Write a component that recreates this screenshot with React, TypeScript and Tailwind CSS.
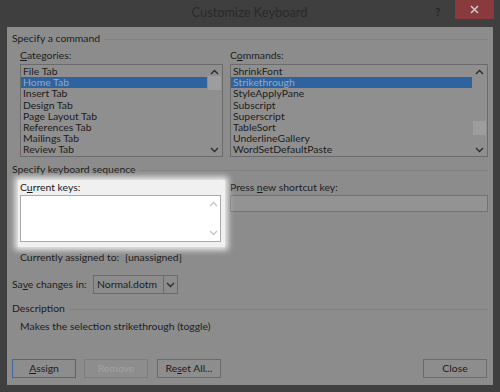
import React from "react";

const U = ({ children }: { children: React.ReactNode }) => (
  <span className="underline underline-offset-[1px]">{children}</span>
);

function Chevron({ dir, color = "#2a2a2a" }: { dir: "up" | "down"; color?: string }) {
  return (
    <svg width="9" height="6" viewBox="0 0 9 6">
      <path
        d={dir === "up" ? "M1 5 L4.5 1.5 L8 5" : "M1 1 L4.5 4.5 L8 1"}
        fill="none"
        stroke={color}
        strokeWidth="1.3"
      />
    </svg>
  );
}

function ListBox({
  items,
  selected,
  width,
  thumbTop,
}: {
  items: string[];
  selected: number;
  width: string;
  thumbTop: number;
}) {
  return (
    <div className={`${width} h-[93px] border border-[#6b6b6b] bg-[#8f8f8f] flex`}>
      <div className="flex-1 flex flex-col pt-[1px]">
        {items.map((it, i) => (
          <div
            key={it}
            className={`h-[11.2px] leading-[11.2px] pl-[2px] whitespace-nowrap text-[10.4px] ${
              i === selected ? "bg-[#2f63a0] text-[#93a9c4]" : ""
            }`}
          >
            {it}
          </div>
        ))}
      </div>
      <div className="w-[15px] flex flex-col items-center pt-[4px] pb-[3px]">
        <Chevron dir="up" />
        <div className="flex-1 w-full relative">
          <div
            className="absolute left-[1px] right-[1px] h-[14px] bg-[#9d9d9d]"
            style={{ top: thumbTop }}
          />
        </div>
        <Chevron dir="down" />
      </div>
    </div>
  );
}

function GroupHeader({ title }: { title: string }) {
  return (
    <div className="h-[14px] flex items-center gap-[4px]">
      <span className="whitespace-nowrap">{title}</span>
      <div className="flex-1 h-px bg-[#818181]" />
    </div>
  );
}

function Btn({
  children,
  className = "",
}: {
  children: React.ReactNode;
  className?: string;
}) {
  return (
    <div
      className={`w-[64px] h-[19px] flex items-center justify-center border bg-[#8d8d8d] ${className}`}
    >
      {children}
    </div>
  );
}

export default function App() {
  return (
    <div
      className="w-[500px] h-[392px] bg-[#3f3f3f] flex flex-col overflow-hidden text-[#1c1c1c]"
      style={{ fontFamily: 'Lato, "Noto Sans", sans-serif' }}
    >
      {/* title bar */}
      <div className="h-[27px] flex items-start">
        <div className="flex-1 h-full flex items-center justify-center pl-[64px] text-[12.8px] text-[#2a2a2a] pb-[1px]">
          Customize Keyboard
        </div>
        <div className="w-[20px] pt-[3px] text-[12px] font-bold text-[#262626]">?</div>
        <div className="w-[39px] h-[19px] bg-[#8a3a3c] flex items-center justify-center mr-[6px]">
          <svg width="9" height="9" viewBox="0 0 9 9">
            <path d="M1 1 L8 8 M8 1 L1 8" stroke="#c9c9c9" strokeWidth="1.6" />
          </svg>
        </div>
      </div>

      {/* client */}
      <div className="mx-[7px] h-[358px] bg-[#8c8c8c] pl-[5px] pr-[5px] pt-[5px] flex flex-col text-[10.4px]">
        <GroupHeader title="Specify a command" />

        <div className="flex mt-[3px] pl-[8px]">
          <div className="w-[211px] flex flex-col">
            <div className="h-[15px] leading-[13px]">
              <U>C</U>ategories:
            </div>
            <ListBox
              width="w-[203px]"
              selected={1}
              thumbTop={1}
              items={[
                "File Tab",
                "Home Tab",
                "Insert Tab",
                "Design Tab",
                "Page Layout Tab",
                "References Tab",
                "Mailings Tab",
                "Review Tab",
              ]}
            />
          </div>
          <div className="flex flex-col">
            <div className="h-[15px] leading-[13px]">
              C<U>o</U>mmands:
            </div>
            <ListBox
              width="w-[258px]"
              selected={1}
              thumbTop={46}
              items={[
                "ShrinkFont",
                "Strikethrough",
                "StyleApplyPane",
                "Subscript",
                "Superscript",
                "TableSort",
                "UnderlineGallery",
                "WordSetDefaultPaste",
              ]}
            />
          </div>
        </div>

        <div className="mt-[6px]">
          <GroupHeader title="Specify keyboard sequence" />
        </div>

        <div className="flex mt-[3px] pl-[6px]">
          <div className="w-[209px] bg-[#f0f0f0] text-[#1a1a1a] pl-[2px] pr-[4px] pb-[5px] shadow-[0_0_6px_3px_rgba(255,255,255,0.85)] relative z-10">
            <div className="h-[14px] leading-[14px]">
              C<U>u</U>rrent keys:
            </div>
            <div className="mt-[1px] h-[47px] bg-white border border-[#a9a9a9] flex justify-end">
              <div className="w-[14px] flex flex-col items-center justify-between py-[5px]">
                <Chevron dir="up" color="#c4c4c4" />
                <Chevron dir="down" color="#c4c4c4" />
              </div>
            </div>
          </div>
          <div className="ml-[5px] flex flex-col">
            <div className="h-[14px] leading-[14px]">
              Press <U>n</U>ew shortcut key:
            </div>
            <div className="mt-[1px] w-[258px] h-[17px] bg-[#939393] border border-[#727272]" />
          </div>
        </div>

        <div className="mt-[3px] pl-[8px] h-[14px] leading-[14px] flex whitespace-nowrap">
          <span className="w-[105px]">Currently assigned to:</span>
          <span>[unassigned]</span>
        </div>

        <div className="mt-[11px] h-[19px] flex items-center whitespace-nowrap">
          <span className="w-[81px]">
            Sa<U>v</U>e changes in:
          </span>
          <div className="w-[85px] h-[19px] border border-[#6b6b6b] flex">
            <div className="flex-1 pl-[3px] leading-[17px]">Normal.dotm</div>
            <div className="w-[14px] border-l border-[#6b6b6b] flex items-center justify-center">
              <Chevron dir="down" />
            </div>
          </div>
        </div>

        <div className="mt-[8px]">
          <GroupHeader title="Description" />
        </div>
        <div className="mt-[3px] pl-[8px] h-[14px] leading-[14px] whitespace-nowrap">
          Makes the selection strikethrough (toggle)
        </div>

        <div className="mt-[26px] flex items-center">
          <Btn className="border-[#3f6a9c]">
            <U>A</U>ssign
          </Btn>
          <Btn className="ml-[8px] border-[#7d7d7d] text-[#a3a3a3]">Remove</Btn>
          <Btn className="ml-[9px] border-[#6b6b6b]">
            Re<U>s</U>et All...
          </Btn>
          <div className="flex-1" />
          <Btn className="border-[#6b6b6b] mr-[1px]">Close</Btn>
        </div>
      </div>
    </div>
  );
}
